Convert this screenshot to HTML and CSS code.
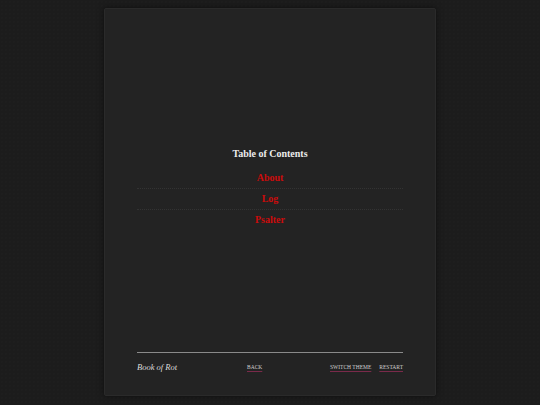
FILE: index.html
```html
<!DOCTYPE html>
<html lang="en">
<head>
  <meta charset="UTF-8">
  <meta name="viewport" content="width=device-width, initial-scale=1.0">
  <title>Book of Rot</title>
  <link rel="stylesheet" href="styles.css">
</head>
<body>
  <div class="page">
    <main class="contents">
      <h2>Table of Contents</h2>
      <ul class="toc">
        <li><a href="#about">About</a></li>
        <li><a href="#log">Log</a></li>
        <li><a href="#psalter">Psalter</a></li>
      </ul>
    </main>
    <footer class="footer">
      <span class="book-title">Book of Rot</span>
      <a class="footer-link back" href="#">Back</a>
      <span class="footer-right">
        <a class="footer-link" href="#">Switch Theme</a>
        <a class="footer-link" href="#">Restart</a>
      </span>
    </footer>
  </div>
</body>
</html>
```

FILE: styles.css
```css
html, body {
  height: 100%;
}

body {
  margin: 0;
  padding: 8px 0 9px;
  box-sizing: border-box;
  background-color: #1c1c1c;
  background-image: radial-gradient(#202020 0.6px, transparent 0.8px);
  background-size: 4px 4px;
  font-family: "Liberation Serif", "DejaVu Serif", serif;
  color: #e6e6e6;
}

.page {
  width: 332px;
  height: 100%;
  margin: 0 auto;
  box-sizing: border-box;
  padding: 0 32px 18px;
  display: flex;
  flex-direction: column;
  background-color: #232323;
  border: 1px solid #2a2a2a;
  border-radius: 2px;
  box-shadow: 0 0 6px rgba(0, 0, 0, 0.5);
}

.contents {
  flex: 1;
  display: flex;
  flex-direction: column;
  justify-content: center;
  text-align: center;
  padding-top: 16px;
}

h2 {
  margin: 0 0 9px;
  font-size: 10px;
  font-weight: bold;
  color: #ececec;
}

.toc {
  list-style: none;
  margin: 0;
  padding: 0;
}

.toc li {
  font-size: 10px;
  line-height: 19px;
  padding-bottom: 1px;
  border-bottom: 1px dotted #333;
}

.toc li:last-child {
  border-bottom: none;
}

.toc a {
  color: #cc0b0b;
  font-weight: bold;
  text-decoration: none;
}

.footer {
  display: flex;
  align-items: center;
  border-top: 1px solid #8a8a8a;
  padding-top: 4px;
  height: 20px;
}

.book-title {
  font-style: italic;
  font-size: 8.5px;
  color: #dcdcdc;
  width: 110px;
}

.footer-link {
  font-size: 5.5px;
  text-transform: uppercase;
  color: #cfcfcf;
  text-decoration: underline;
  text-decoration-color: #7a2a4a;
  text-underline-offset: 1.5px;
}

.footer-right {
  margin-left: auto;
  display: flex;
  gap: 8px;
}
```
